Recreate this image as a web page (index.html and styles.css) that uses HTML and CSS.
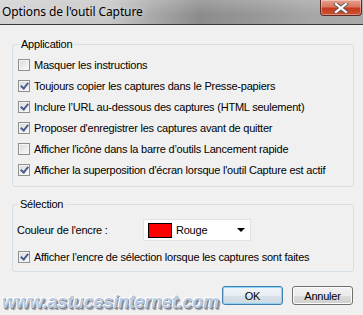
FILE: index.html
```html
<!DOCTYPE html>
<html lang="fr">
<head>
<meta charset="utf-8">
<title>Options de l'outil Capture</title>
<link rel="stylesheet" href="styles.css">
</head>
<body>
<div class="window">
  <div class="titlebar">
    <span class="title">Options de l'outil Capture</span>
    <span class="close">
      <svg width="16" height="10" viewBox="0 0 16 10"><path d="M3 1 L13 9 M13 1 L3 9" stroke="#5a5a5a" stroke-width="4" stroke-linecap="square"/><path d="M3 1 L13 9 M13 1 L3 9" stroke="#fff" stroke-width="2.2" stroke-linecap="square"/></svg>
    </span>
  </div>
  <div class="content">
    <fieldset class="group group-app">
      <legend>Application</legend>
      <div class="row"><span class="cb"></span><span>Masquer les instructions</span></div>
      <div class="row"><span class="cb checked"></span><span>Toujours copier les captures dans le Presse-papiers</span></div>
      <div class="row"><span class="cb checked"></span><span>Inclure l’URL au-dessous des captures (HTML seulement)</span></div>
      <div class="row"><span class="cb checked"></span><span>Proposer d'enregistrer les captures avant de quitter</span></div>
      <div class="row"><span class="cb"></span><span>Afficher l'icône dans la barre d’outils Lancement rapide</span></div>
      <div class="row"><span class="cb checked"></span><span>Afficher la superposition d'écran lorsque l'outil Capture est actif</span></div>
    </fieldset>
    <fieldset class="group group-sel">
      <legend>Sélection</legend>
      <div class="color-row">
        <span class="label">Couleur de l'encre :</span>
        <span class="select"><span class="swatch"></span><span class="sel-text">Rouge</span><span class="arrow"></span></span>
      </div>
      <div class="row"><span class="cb checked"></span><span>Afficher l’encre de sélection lorsque les captures sont faites</span></div>
    </fieldset>
    <div class="buttons">
      <span class="btn btn-ok">OK</span>
      <span class="btn">Annuler</span>
    </div>
  </div>
  <div class="watermark">www.astucesinternet.com</div>
</div>
</body>
</html>
```
FILE: styles.css
```css
html, body { margin: 0; padding: 0; }
body { background: #f0f0f0; font-family: "Liberation Sans", Arial, sans-serif; font-size: 11px; color: #000; letter-spacing: -0.22px; }
.window { position: relative; width: 363px; height: 315px; overflow: hidden; background: #f0f0f0; }
.titlebar {
  height: 24px; border-bottom: 1px solid #3a3a3a;
  display: flex; justify-content: space-between; align-items: flex-start;
  background:
    linear-gradient(to bottom, rgba(255,255,255,0.18), rgba(255,255,255,0) 60%),
    linear-gradient(to right, #d2d2d2 0%, #c6c6c6 30%, #a9a9a9 42%, #8c8c8c 55%, #979797 70%, #a6a6a6 85%, #a9a9a9 100%);
}
.title {
  font-family: "Noto Sans", "Open Sans", sans-serif; font-size: 12px; line-height: 16px;
  padding: 4px 0 0 2px; color: #000; letter-spacing: -0.1px;
  text-shadow: 0 0 6px rgba(255,255,255,0.7);
}
.close {
  width: 40px; height: 15px; margin-right: 1px;
  display: flex; align-items: center; justify-content: center;
  border: 1px solid #5a2a24; border-top: none; border-radius: 0 0 4px 4px;
  background: linear-gradient(to bottom, #e6a08e 0%, #da7760 45%, #c63a20 55%, #cc5234 100%);
  box-shadow: inset 0 0 0 1px rgba(255,255,255,0.35);
}
.content { padding: 12px 10px 0 12px; }
.group {
  margin: 0; width: 342px; box-sizing: border-box;
  border: 1px solid #d5dfe5; border-radius: 3px;
  padding: 3px 0 6px 5px;
}
.group legend { padding: 0 2px; margin-left: 1px; line-height: 14px; height: 14px; }
.group-sel { margin-top: 10px; padding-top: 7px; padding-bottom: 4px; padding-left: 4px; }
.row { height: 21px; display: flex; align-items: center; gap: 4px; white-space: nowrap; }
.group-sel .row { margin-left: 1px; margin-top: 4px; }
.cb {
  width: 10px; height: 10px; flex: none;
  border: 1px solid #8e8f8f;
  background: linear-gradient(135deg, #d8d8d8 0%, #eeeeee 60%, #fbfbfb 100%);
  box-shadow: inset 0 0 0 1px #f4f4f4;
  position: relative;
}
.cb.checked::after {
  content: ""; position: absolute; left: 3px; top: 0px; width: 3px; height: 6px;
  border: solid #4b5e93; border-width: 0 2px 2px 0; transform: rotate(40deg);
}
.color-row { display: flex; align-items: center; height: 24px; }
.label { width: 126px; }
.select {
  width: 108px; height: 22px; box-sizing: border-box;
  border: 1px solid #e2e2e2; background: #fff;
  display: flex; align-items: center; padding-left: 4px;
}
.swatch { background: #ff0000; border: 1px solid #000; box-sizing: border-box; width: 24px; height: 15px; }
.sel-text { margin-left: 4px; flex: 1; }
.arrow {
  width: 0; height: 0; margin-right: 5px;
  border-left: 4px solid transparent; border-right: 4px solid transparent; border-top: 4px solid #000;
}
.buttons { display: flex; justify-content: flex-end; gap: 9px; padding-top: 14px; padding-right: 0; }
.btn {
  width: 61px; height: 19px; box-sizing: border-box;
  display: flex; align-items: center; justify-content: center;
  border: 1px solid #707070; border-radius: 3px;
  background: linear-gradient(to bottom, #f2f2f2 0%, #ebebeb 50%, #dddddd 51%, #cfcfcf 100%);
  box-shadow: inset 0 0 0 1px #fcfcfc;
}
.btn-ok {
  border-color: #3c7fb1;
  background: linear-gradient(to bottom, #f0f5f9 0%, #e6edf2 50%, #d8e1e8 51%, #cfd9e1 100%);
  box-shadow: inset 0 0 0 1px #8fd3f5;
}
.watermark {
  position: absolute; left: 2px; top: 292px;
  font-family: "Liberation Sans", Arial, sans-serif; font-weight: bold; font-style: italic;
  font-size: 18px; line-height: 20px; color: #b9c9df; letter-spacing: -0.2px;
  text-shadow: -1px -1px 0 #fff, 1px 1px 0 #7a828c, 2px 2px 1px #9aa0a8;
}
```
